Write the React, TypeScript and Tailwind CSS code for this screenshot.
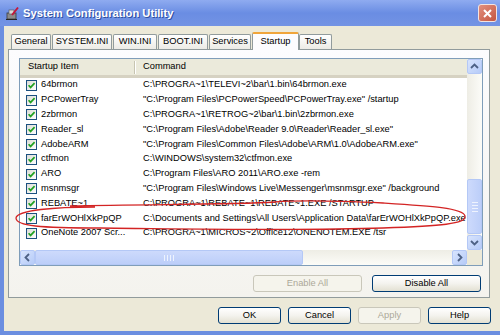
import React from "react";

const rows = [
    ["64brmon", "C:\\PROGRA~1\\TELEVI~2\\bar\\1.bin\\64brmon.exe"],
    ["PCPowerTray", "\"C:\\Program Files\\PCPowerSpeed\\PCPowerTray.exe\" /startup"],
    ["2zbrmon", "C:\\PROGRA~1\\RETROG~2\\bar\\1.bin\\2zbrmon.exe"],
    ["Reader_sl", "\"C:\\Program Files\\Adobe\\Reader 9.0\\Reader\\Reader_sl.exe\""],
    ["AdobeARM", "\"C:\\Program Files\\Common Files\\Adobe\\ARM\\1.0\\AdobeARM.exe\""],
    ["ctfmon", "C:\\WINDOWS\\system32\\ctfmon.exe"],
    ["ARO", "C:\\Program Files\\ARO 2011\\ARO.exe -rem"],
    ["msnmsgr", "\"C:\\Program Files\\Windows Live\\Messenger\\msnmsgr.exe\" /background"],
    ["REBATE~1", "C:\\PROGRA~1\\REBATE~1\\REBATE~1.EXE /STARTUP"],
    ["farErWOHlXkPpQP", "C:\\Documents and Settings\\All Users\\Application Data\\farErWOHlXkPpQP.exe"],
    ["OneNote 2007 Scr...", "C:\\PROGRA~1\\MICROS~2\\Office12\\ONENOTEM.EXE /tsr"],
];

const tabs = [
    { label: "General", w: "w-[40px]" },
    { label: "SYSTEM.INI", w: "w-[60px]" },
    { label: "WIN.INI", w: "w-[44px]" },
    { label: "BOOT.INI", w: "w-[50px]" },
    { label: "Services", w: "w-[42px]" },
    { label: "Startup", w: "w-[47px]", active: true },
    { label: "Tools", w: "w-[33px]" },
];

function Check() {
    return (
        <div className="w-[11px] h-[11px] shrink-0 border border-[#1c5180] bg-gradient-to-br from-[#dcdcd7] to-white flex items-center justify-center">
            <svg width="9" height="9" viewBox="0 0 9 9">
                <path d="M1.6 4.2 L3.6 6.4 L7.6 2.2" stroke="#21a121" strokeWidth="1.7" fill="none" />
            </svg>
        </div>
    );
}

// little blue scroll button with a chevron
function Arrow({ dir }: { dir: "up" | "down" | "left" | "right" }) {
    const d = {
        up: "M3 8 L6.5 4.5 L10 8",
        down: "M3 5 L6.5 8.5 L10 5",
        left: "M8 3 L4.5 6.5 L8 10",
        right: "M5 3 L8.5 6.5 L5 10",
    }[dir];
    return (
        <div className="w-[15px] h-[15px] shrink-0 rounded-[2px] border border-[#b4c8f6] bg-gradient-to-br from-[#d8e4fd] to-[#b6cbf8] flex items-center justify-center">
            <svg width="13" height="13" viewBox="0 0 13 13">
                <path d={d} stroke="#4d6185" strokeWidth="1.8" fill="none" />
            </svg>
        </div>
    );
}

function Btn({ label, disabled, w }: { label: string; disabled?: boolean; w: string }) {
    return (
        <div
            className={`${w} h-[17px] flex items-center justify-center rounded-[3px] border ${
                disabled
                    ? "border-[#c9c7ba] text-[#aca899] bg-[#f5f4ec]"
                    : "border-[#003c74] text-black bg-gradient-to-b from-white via-[#f4f3ee] to-[#e3e0d2]"
            }`}
        >
            {label}
        </div>
    );
}

export default function App() {
    return (
        <div className="relative w-[500px] h-[335px] overflow-hidden bg-[#ece9d8] flex flex-col font-['Liberation_Sans',Arial,sans-serif] text-[9.3px] text-black">
            {/* title bar */}
            <div className="h-[26px] shrink-0 flex items-center bg-gradient-to-b from-[#8fabf0] via-[#6a8de3] to-[#7393e4]">
                <svg width="15" height="15" viewBox="0 0 15 15" className="ml-[5px]">
                    <rect x="2" y="7" width="9" height="6" fill="#8c8c8c" stroke="#3c3c3c" strokeWidth="0.8" />
                    <rect x="4" y="4" width="5" height="4" fill="#d8d8d8" stroke="#555" strokeWidth="0.6" />
                    <path d="M7 9 L13 1.5" stroke="#c4173b" strokeWidth="2" />
                    <path d="M1 13.5 L12 13.5" stroke="#222" strokeWidth="1" />
                </svg>
                <span className="ml-[3px] text-white font-bold text-[11.2px] [text-shadow:1px_1px_0_#2f4f9f]">
                    System Configuration Utility
                </span>
                <div className="ml-auto mr-[3px] w-[19px] h-[18px] rounded-[3px] border border-[#f3e3e0] bg-gradient-to-br from-[#e2907f] to-[#c4553f] flex items-center justify-center">
                    <svg width="11" height="11" viewBox="0 0 11 11">
                        <path d="M2 2 L9 9 M9 2 L2 9" stroke="white" strokeWidth="2" />
                    </svg>
                </div>
            </div>

            {/* body */}
            <div className="flex-1 flex flex-col border-l-[4px] border-b-[4px] border-[#6b8ee0]">
                {/* tabs */}
                <div className="relative z-10 flex items-end h-[18px] mt-[5px] pl-[7px]">
                    {tabs.map((t) =>
                        t.active ? (
                            <div
                                key={t.label}
                                className={`${t.w} h-[18px] -mb-px border-x border-[#919b9c] border-t-2 border-t-[#f0a53a] rounded-t-[2px] bg-[#fcfcfe] flex items-center justify-center`}
                            >
                                {t.label}
                            </div>
                        ) : (
                            <div
                                key={t.label}
                                className={`${t.w} h-[15px] mr-px border-x border-t border-[#919b9c] rounded-t-[2px] bg-gradient-to-b from-white to-[#ecebe5] flex items-center justify-center`}
                            >
                                {t.label}
                            </div>
                        )
                    )}
                </div>

                {/* tab panel */}
                <div className="ml-[4px] w-[482px] h-[249px] border border-[#919b9c] bg-gradient-to-b from-[#fcfcfe] to-[#f4f3ee] pt-[8px] pl-[10px] flex flex-col">
                    {/* list view */}
                    <div className="w-[464px] h-[208px] border border-[#7f9db9] bg-white flex">
                        <div className="w-[447px] flex flex-col">
                            <div className="h-[191px] overflow-hidden whitespace-nowrap">
                                <div className="h-[19px] flex items-center bg-[#ebeadb] border-b-[3px] border-[#d6d2c2]">
                                    <div className="w-[114px] pl-[8px]">Startup Item</div>
                                    <div className="w-[2px] h-[13px] border-l border-[#c7c5b2] bg-white" />
                                    <div className="pl-[7px]">Command</div>
                                </div>
                                {rows.map(([name, cmd]) => (
                                    <div key={name} className="h-[14.8px] flex items-center">
                                        <div className="w-[123px] shrink-0 flex items-center gap-[4px] pl-[6px]">
                                            <Check />
                                            <span>{name}</span>
                                        </div>
                                        <span>{cmd}</span>
                                    </div>
                                ))}
                            </div>
                            {/* horizontal scrollbar */}
                            <div className="h-[15px] flex items-center bg-gradient-to-b from-[#eeede5] to-[#fcfcf8]">
                                <Arrow dir="left" />
                                <div className="flex-1 h-[15px] flex items-center">
                                    <div className="w-[268px] h-[15px] rounded-[2px] border border-[#b4c8f6] bg-gradient-to-b from-[#cddafc] to-[#bccef9] flex items-center justify-center gap-[2px]">
                                        <div className="w-px h-[6px] bg-[#eef3fe]" />
                                        <div className="w-px h-[6px] bg-[#eef3fe]" />
                                        <div className="w-px h-[6px] bg-[#eef3fe]" />
                                        <div className="w-px h-[6px] bg-[#eef3fe]" />
                                    </div>
                                </div>
                                <Arrow dir="right" />
                            </div>
                        </div>
                        <div className="w-[15px] flex flex-col">
                            {/* vertical scrollbar */}
                            <div className="h-[191px] flex flex-col bg-gradient-to-r from-[#eeede5] to-[#fcfcf8]">
                                <Arrow dir="up" />
                                <div className="flex-1 pt-[105px]">
                                    <div className="w-[15px] h-[55px] rounded-[2px] border border-[#b4c8f6] bg-gradient-to-r from-[#cddafc] to-[#bccef9] flex flex-col items-center justify-center gap-[2px]">
                                        <div className="w-[6px] h-px bg-[#eef3fe]" />
                                        <div className="w-[6px] h-px bg-[#eef3fe]" />
                                        <div className="w-[6px] h-px bg-[#eef3fe]" />
                                        <div className="w-[6px] h-px bg-[#eef3fe]" />
                                    </div>
                                </div>
                                <Arrow dir="down" />
                            </div>
                            <div className="h-[15px] bg-[#ece9d8]" />
                        </div>
                    </div>

                    <div className="w-[464px] mt-[9px] flex justify-end gap-[10px] pr-[2px]">
                        <Btn label="Enable All" disabled w="w-[109px]" />
                        <Btn label="Disable All" w="w-[109px]" />
                    </div>
                </div>

                {/* dialog buttons */}
                <div className="mt-[9px] flex justify-end gap-[7px] pr-[9px]">
                    <Btn label="OK" w="w-[63px]" />
                    <Btn label="Cancel" w="w-[63px]" />
                    <Btn label="Apply" disabled w="w-[63px]" />
                    <Btn label="Help" w="w-[63px]" />
                </div>
            </div>

            {/* hand drawn red ring around the suspicious entry */}
            <svg className="absolute inset-0 pointer-events-none" width="500" height="335" viewBox="0 0 500 335">
                <path
                    d="M95 207 C55 207, 17 210, 16 218 C16 226, 40 228, 100 228 C200 229, 300 231, 383 228 C440 226, 467 224, 465 216 C463 208, 430 206, 383 203 C340 201, 300 200, 275 202 C230 205, 150 204, 70 206"
                    stroke="#d32424"
                    strokeWidth="1.3"
                    fill="none"
                />
            </svg>
        </div>
    );
}
